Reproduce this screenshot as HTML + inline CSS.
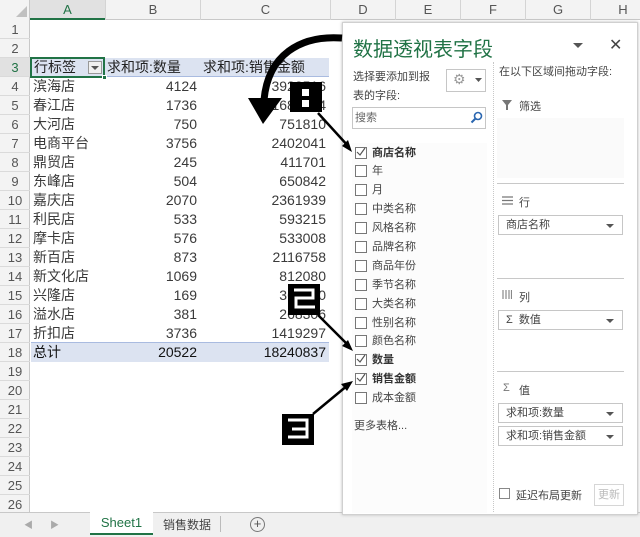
<!DOCTYPE html><html><head><meta charset="utf-8"><style>
*{margin:0;padding:0;box-sizing:border-box}
body{width:640px;height:537px;overflow:hidden;background:#fff;font-family:"Liberation Sans","Noto Sans CJK SC",sans-serif;position:relative;font-size:14px;color:#333}
.a{position:absolute;white-space:nowrap}
.rn{position:absolute;left:0;width:30px;text-align:center;font-size:13px;color:#555;border-bottom:1px solid #dadada;height:19px;line-height:19px}
.cell{position:absolute;height:19px;line-height:19px;font-size:14px;color:#3a3a3a}
.cb{position:absolute;left:355px;width:12px;height:12px;border:1px solid #777;background:#fff}
.fl{position:absolute;left:372px;font-size:11px;color:#444;line-height:14px}
.dd{position:absolute;left:498px;width:125px;height:20px;border:1px solid #c6c6c6;background:#fff;font-size:11px;line-height:18px;padding-left:7px;color:#444}
.dd:after{content:"";position:absolute;right:8px;top:8px;border:4px solid transparent;border-top:4px solid #555;border-bottom:0}
.hl{position:absolute;left:497px;width:127px;height:1px;background:#c8c8c8}
.sec{position:absolute;left:503px;font-size:12px;color:#444}
</style></head><body>
<div class="a" style="left:0;top:0;width:640px;height:20px;background:#f3f3f3;border-bottom:1px solid #c8c8c8"></div>
<div class="a" style="left:30px;top:0;width:75px;height:20px;background:#e1e1e1;border-bottom:2px solid #217346"></div>
<div class="a" style="left:0;top:0;width:30px;height:20px;background:#f3f3f3;border-right:1px solid #c8c8c8"></div>
<svg class="a" style="left:16px;top:6px" width="12" height="12"><path d="M11 0L11 11L0 11Z" fill="#c0c0c0"/></svg>
<div class="a" style="left:30px;top:0;width:75px;text-align:center;line-height:20px;font-size:13px;color:#217346">A</div>
<div class="a" style="left:105px;top:0;width:95px;text-align:center;line-height:20px;font-size:13px;color:#555;border-left:1px solid #d4d4d4;height:20px">B</div>
<div class="a" style="left:200px;top:0;width:130px;text-align:center;line-height:20px;font-size:13px;color:#555;border-left:1px solid #d4d4d4;height:20px">C</div>
<div class="a" style="left:330px;top:0;width:65px;text-align:center;line-height:20px;font-size:13px;color:#555;border-left:1px solid #d4d4d4;height:20px">D</div>
<div class="a" style="left:395px;top:0;width:65px;text-align:center;line-height:20px;font-size:13px;color:#555;border-left:1px solid #d4d4d4;height:20px">E</div>
<div class="a" style="left:460px;top:0;width:65px;text-align:center;line-height:20px;font-size:13px;color:#555;border-left:1px solid #d4d4d4;height:20px">F</div>
<div class="a" style="left:525px;top:0;width:65px;text-align:center;line-height:20px;font-size:13px;color:#555;border-left:1px solid #d4d4d4;height:20px">G</div>
<div class="a" style="left:590px;top:0;width:65px;text-align:center;line-height:20px;font-size:13px;color:#555;border-left:1px solid #d4d4d4;height:20px">H</div>
<div class="a" style="left:0;top:20px;width:30px;height:492px;background:#f3f3f3;border-right:1px solid #c8c8c8"></div>
<div class="rn" style="top:20px">1</div><div class="rn" style="top:39px">2</div><div class="rn" style="top:58px;background:#e1e1e1;color:#217346">3</div><div class="rn" style="top:77px">4</div><div class="rn" style="top:96px">5</div><div class="rn" style="top:115px">6</div><div class="rn" style="top:134px">7</div><div class="rn" style="top:153px">8</div><div class="rn" style="top:172px">9</div><div class="rn" style="top:191px">10</div><div class="rn" style="top:210px">11</div><div class="rn" style="top:229px">12</div><div class="rn" style="top:248px">13</div><div class="rn" style="top:267px">14</div><div class="rn" style="top:286px">15</div><div class="rn" style="top:305px">16</div><div class="rn" style="top:324px">17</div><div class="rn" style="top:343px">18</div><div class="rn" style="top:362px">19</div><div class="rn" style="top:381px">20</div><div class="rn" style="top:400px">21</div><div class="rn" style="top:419px">22</div><div class="rn" style="top:438px">23</div><div class="rn" style="top:457px">24</div><div class="rn" style="top:476px">25</div><div class="rn" style="top:495px">26</div>
<div class="a" style="left:31px;top:58px;width:298px;height:19px;background:#dce3f1;border-bottom:1px solid #a9bbe0"></div>
<div class="a" style="left:30px;top:57px;width:75px;height:21px;border:2px solid #217346"></div>
<div class="a" style="left:102px;top:75px;width:5px;height:5px;background:#217346;border:1px solid #fff"></div>
<div class="cell" style="left:34px;top:58px;color:#222">行标签</div>
<div class="a" style="left:88px;top:61px;width:14px;height:13px;border:1px solid #999;background:#f0f0f0"></div>
<svg class="a" style="left:91px;top:66px" width="8" height="4"><path d="M0 0H8L4 4Z" fill="#555"/></svg>
<div class="cell" style="left:107px;top:58px;color:#222">求和项:数量</div>
<div class="cell" style="left:203px;top:58px;color:#222">求和项:销售金额</div>
<div class="cell" style="left:33px;top:77px">滨海店</div><div class="cell" style="left:105px;width:92px;text-align:right;top:77px">4124</div><div class="cell" style="left:200px;width:126px;text-align:right;top:77px">3922516</div>
<div class="cell" style="left:33px;top:96px">春江店</div><div class="cell" style="left:105px;width:92px;text-align:right;top:96px">1736</div><div class="cell" style="left:200px;width:126px;text-align:right;top:96px">1688074</div>
<div class="cell" style="left:33px;top:115px">大河店</div><div class="cell" style="left:105px;width:92px;text-align:right;top:115px">750</div><div class="cell" style="left:200px;width:126px;text-align:right;top:115px">751810</div>
<div class="cell" style="left:33px;top:134px">电商平台</div><div class="cell" style="left:105px;width:92px;text-align:right;top:134px">3756</div><div class="cell" style="left:200px;width:126px;text-align:right;top:134px">2402041</div>
<div class="cell" style="left:33px;top:153px">鼎贸店</div><div class="cell" style="left:105px;width:92px;text-align:right;top:153px">245</div><div class="cell" style="left:200px;width:126px;text-align:right;top:153px">411701</div>
<div class="cell" style="left:33px;top:172px">东峰店</div><div class="cell" style="left:105px;width:92px;text-align:right;top:172px">504</div><div class="cell" style="left:200px;width:126px;text-align:right;top:172px">650842</div>
<div class="cell" style="left:33px;top:191px">嘉庆店</div><div class="cell" style="left:105px;width:92px;text-align:right;top:191px">2070</div><div class="cell" style="left:200px;width:126px;text-align:right;top:191px">2361939</div>
<div class="cell" style="left:33px;top:210px">利民店</div><div class="cell" style="left:105px;width:92px;text-align:right;top:210px">533</div><div class="cell" style="left:200px;width:126px;text-align:right;top:210px">593215</div>
<div class="cell" style="left:33px;top:229px">摩卡店</div><div class="cell" style="left:105px;width:92px;text-align:right;top:229px">576</div><div class="cell" style="left:200px;width:126px;text-align:right;top:229px">533008</div>
<div class="cell" style="left:33px;top:248px">新百店</div><div class="cell" style="left:105px;width:92px;text-align:right;top:248px">873</div><div class="cell" style="left:200px;width:126px;text-align:right;top:248px">2116758</div>
<div class="cell" style="left:33px;top:267px">新文化店</div><div class="cell" style="left:105px;width:92px;text-align:right;top:267px">1069</div><div class="cell" style="left:200px;width:126px;text-align:right;top:267px">812080</div>
<div class="cell" style="left:33px;top:286px">兴隆店</div><div class="cell" style="left:105px;width:92px;text-align:right;top:286px">169</div><div class="cell" style="left:200px;width:126px;text-align:right;top:286px">367150</div>
<div class="cell" style="left:33px;top:305px">溢水店</div><div class="cell" style="left:105px;width:92px;text-align:right;top:305px">381</div><div class="cell" style="left:200px;width:126px;text-align:right;top:305px">268306</div>
<div class="cell" style="left:33px;top:324px">折扣店</div><div class="cell" style="left:105px;width:92px;text-align:right;top:324px">3736</div><div class="cell" style="left:200px;width:126px;text-align:right;top:324px">1419297</div>
<div class="a" style="left:31px;top:342px;width:298px;height:20px;background:#dce3f1;border-top:1px solid #a9bbe0"></div>
<div class="cell" style="left:33px;top:343px;color:#111">总计</div><div class="cell" style="left:105px;width:92px;text-align:right;top:343px;color:#111">20522</div><div class="cell" style="left:200px;width:126px;text-align:right;top:343px;color:#111">18240837</div>
<div class="a" style="left:0;top:512px;width:640px;height:25px;background:#f0f0f0;border-top:1px solid #c8c8c8"></div>
<div class="a" style="left:24px;top:518px;font-size:9px;color:#aaa">◀</div><div class="a" style="left:50px;top:518px;font-size:9px;color:#aaa">▶</div>
<div class="a" style="left:90px;top:512px;width:63px;height:23px;background:#fff;border-bottom:2px solid #217346;text-align:center;line-height:22px;font-size:13px;color:#217346">Sheet1</div>
<div class="a" style="left:163px;top:516px;font-size:12px;color:#444">销售数据</div>
<div class="a" style="left:220px;top:516px;width:1px;height:16px;background:#bbb"></div>
<div class="a" style="left:250px;top:517px;width:15px;height:15px;border:1px solid #777;border-radius:50%;text-align:center;line-height:12px;font-size:13px;color:#555">+</div>
<div class="a" style="left:342px;top:22px;width:296px;height:493px;background:#fff;border:1px solid #d0d0d0;box-shadow:0 0 3px #bbb"></div>
<div class="a" style="left:353px;top:33px;font-size:20px;color:#217346">数据透视表字段</div>
<svg class="a" style="left:573px;top:43px" width="10" height="6"><path d="M0 0H10L5 5Z" fill="#555"/></svg>
<div class="a" style="left:609px;top:35px;font-size:16px;color:#444">✕</div>
<div class="a" style="left:353px;top:68px;font-size:11px;color:#444;line-height:19px">选择要添加到报<br>表的字段:</div>
<div class="a" style="left:446px;top:69px;width:40px;height:23px;border:1px solid #c6c6c6"></div>
<div class="a" style="left:453px;top:71px;font-size:14px;color:#999">⚙</div>
<svg class="a" style="left:475px;top:78px" width="7" height="4"><path d="M0 0H7L3.5 4Z" fill="#555"/></svg>
<div class="a" style="left:352px;top:107px;width:134px;height:22px;border:1px solid #c6c6c6;font-size:11px;line-height:20px;padding-left:2px;color:#666">搜索</div>
<svg class="a" style="left:470px;top:111px" width="13" height="13"><circle cx="8" cy="5" r="3.5" fill="none" stroke="#2a66b0" stroke-width="1.6"/><path d="M5.5 7.5L1.5 11.5" stroke="#2a66b0" stroke-width="2"/></svg>
<div class="a" style="left:352px;top:143px;width:135px;height:370px;background:#fcfcfc"></div>
<div class="a" style="left:493px;top:62px;width:0;height:450px;border-left:1px dotted #c8c8c8"></div>
<div class="cb" style="top:147px"></div><div class="fl" style="top:146px;font-weight:bold;color:#333">商店名称</div>
<div class="cb" style="top:165px"></div><div class="fl" style="top:164px">年</div>
<div class="cb" style="top:184px"></div><div class="fl" style="top:183px">月</div>
<div class="cb" style="top:203px"></div><div class="fl" style="top:202px">中类名称</div>
<div class="cb" style="top:222px"></div><div class="fl" style="top:221px">风格名称</div>
<div class="cb" style="top:241px"></div><div class="fl" style="top:240px">品牌名称</div>
<div class="cb" style="top:260px"></div><div class="fl" style="top:259px">商品年份</div>
<div class="cb" style="top:279px"></div><div class="fl" style="top:278px">季节名称</div>
<div class="cb" style="top:298px"></div><div class="fl" style="top:297px">大类名称</div>
<div class="cb" style="top:317px"></div><div class="fl" style="top:316px">性别名称</div>
<div class="cb" style="top:335px"></div><div class="fl" style="top:334px">颜色名称</div>
<div class="cb" style="top:354px"></div><div class="fl" style="top:353px;font-weight:bold;color:#333">数量</div>
<div class="cb" style="top:373px"></div><div class="fl" style="top:372px;font-weight:bold;color:#333">销售金额</div>
<div class="cb" style="top:392px"></div><div class="fl" style="top:391px">成本金额</div>
<svg class="a" style="left:355px;top:145px" width="12" height="250"><path d="M2 7L5 10L10 3M2 214L5 217L10 210M2 233L5 236L10 229" fill="none" stroke="#555" stroke-width="1.2"/></svg>
<div class="a" style="left:354px;top:417px;font-size:11px;color:#444">更多表格...</div>
<div class="a" style="left:499px;top:63px;font-size:11px;color:#444">在以下区域间拖动字段:</div>
<div class="a" style="left:497px;top:118px;width:127px;height:60px;background:#fafafa"></div>
<svg class="a" style="left:502px;top:100px" width="10" height="10"><path d="M0 0H10L6 5V10H4V5Z" fill="#777"/></svg>
<div class="sec" style="left:519px;top:98px;font-size:11px">筛选</div>
<div class="hl" style="top:183px"></div>
<svg class="a" style="left:502px;top:196px" width="11" height="9"><path d="M0 1H11M0 4.5H11M0 8H11" stroke="#777" stroke-width="1.2"/></svg>
<div class="sec" style="left:519px;top:194px;font-size:11px">行</div>
<div class="dd" style="top:215px">商店名称</div>
<div class="hl" style="top:278px"></div>
<svg class="a" style="left:502px;top:290px" width="10" height="9"><path d="M1 0V9M4 0V9M7 0V9M9.5 0V9" stroke="#888" stroke-width="1.2"/></svg>
<div class="sec" style="left:519px;top:289px;font-size:11px">列</div>
<div class="dd" style="top:310px">Σ&nbsp; 数值</div>
<div class="hl" style="top:371px"></div>
<div class="sec" style="top:382px;font-size:11px;color:#777">Σ</div><div class="sec" style="left:519px;top:382px;font-size:11px">值</div>
<div class="dd" style="top:403px">求和项:数量</div>
<div class="dd" style="top:426px">求和项:销售金额</div>
<div class="a" style="left:499px;top:488px;width:11px;height:11px;border:1px solid #888"></div>
<div class="a" style="left:516px;top:487px;font-size:11px;color:#444">延迟布局更新</div>
<div class="a" style="left:594px;top:484px;width:30px;height:22px;border:1px solid #d6d6d6;font-size:11px;color:#bbb;text-align:center;line-height:20px">更新</div>
<svg class="a" style="left:0;top:0" width="640" height="537">
<path d="M342 38C300 35 268 55 264 100" fill="none" stroke="#000" stroke-width="7"/>
<path d="M248 98L282 98L263 124Z" fill="#000"/>
<rect x="290" y="82" width="32" height="30" fill="#000"/>
<rect x="302" y="89" width="7" height="7" fill="#fff"/><rect x="302" y="100" width="7" height="7" fill="#fff"/>
<path d="M318 113L349 147" stroke="#000" stroke-width="2.5"/><path d="M352 152L342 146L348 140Z" fill="#000"/>
<rect x="288" y="284" width="32" height="31" fill="#000"/>
<path d="M294 290H313V298H296V307H315" fill="none" stroke="#fff" stroke-width="3"/>
<path d="M318 315L349 346" stroke="#000" stroke-width="2.5"/><path d="M353 351L342 346L348 340Z" fill="#000"/>
<rect x="282" y="414" width="32" height="31" fill="#000"/>
<path d="M288 420H307V437H288M292 429H307" fill="none" stroke="#fff" stroke-width="3"/>
<path d="M313 414L348 385" stroke="#000" stroke-width="2.5"/><path d="M353 381L347 391L341 384Z" fill="#000"/>
</svg>
</body></html>
